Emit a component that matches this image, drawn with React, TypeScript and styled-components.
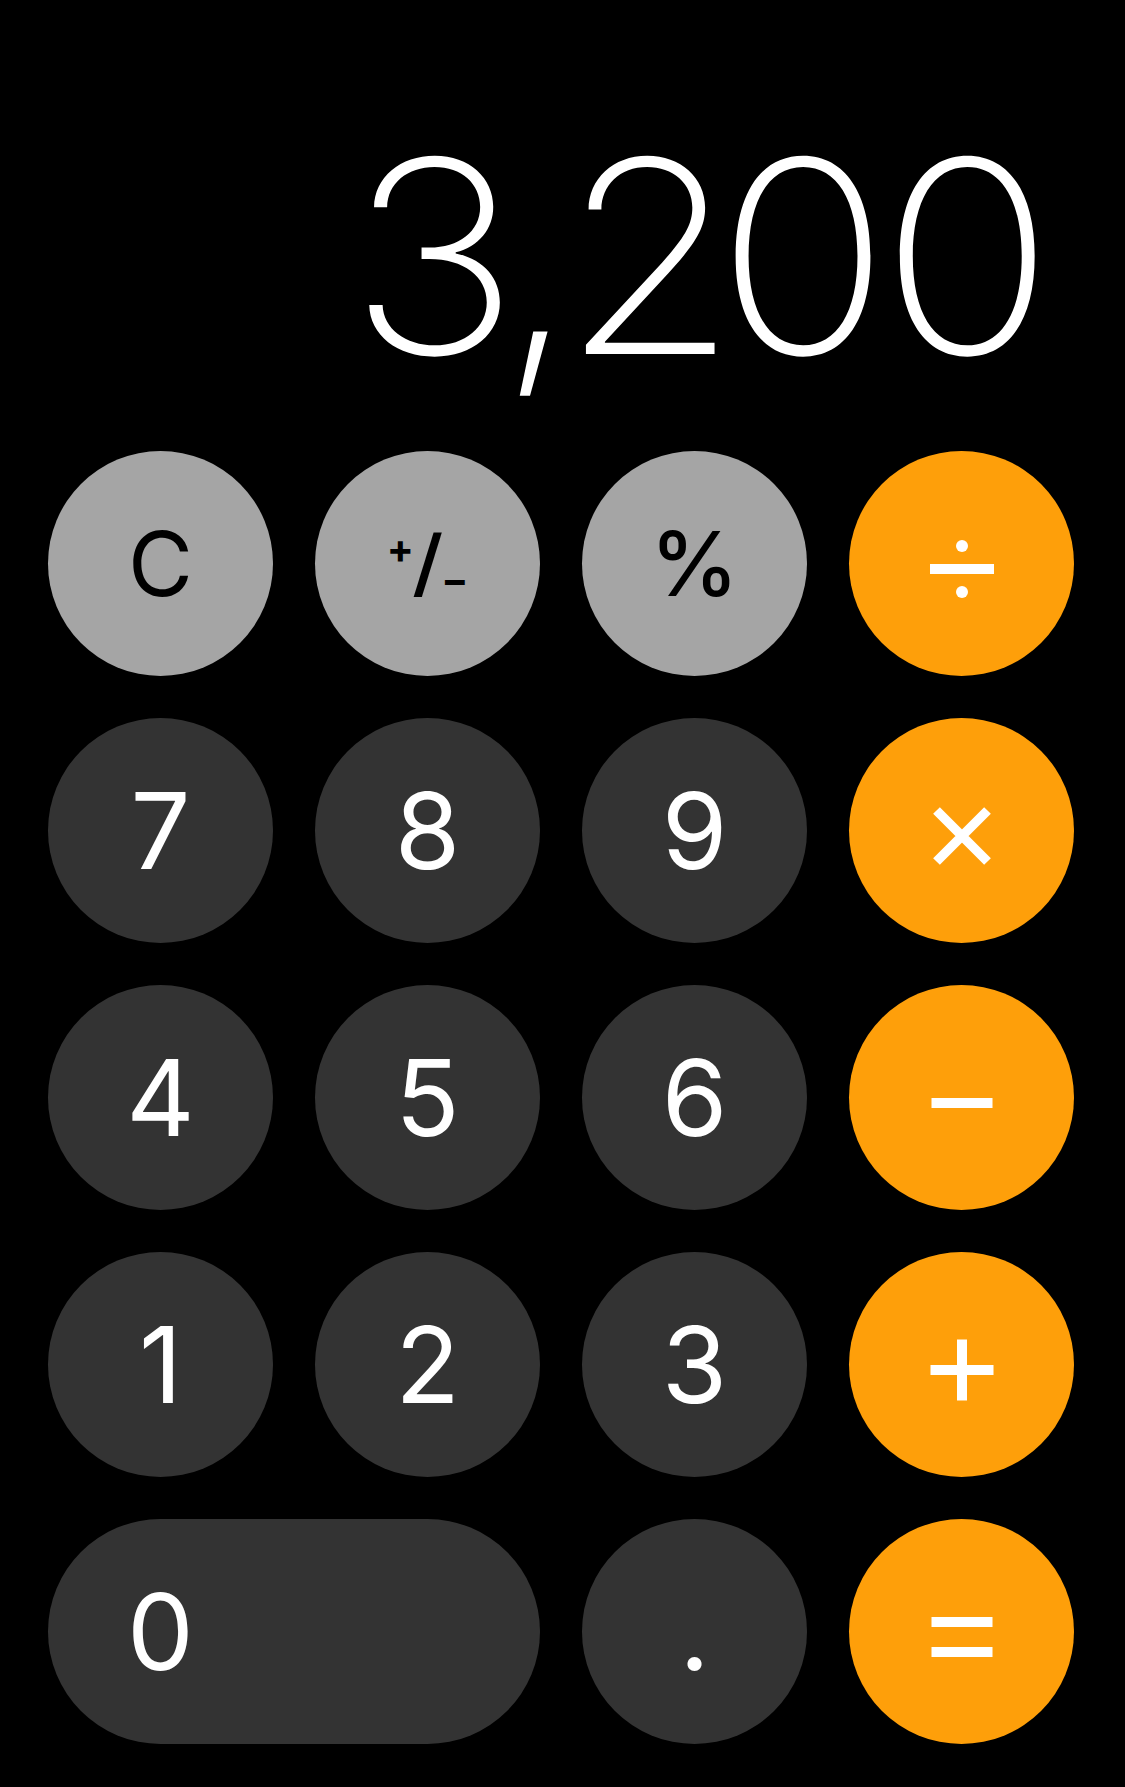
import React from 'react';
import styled, { createGlobalStyle } from 'styled-components';

type Kind = 'func' | 'digit' | 'op';

const colors: Record<Kind, { bg: string; fg: string }> = {
  func: { bg: '#a5a5a5', fg: '#000' },
  digit: { bg: '#333333', fg: '#fff' },
  op: { bg: '#fe9f0a', fg: '#fff' },
};

const GlobalStyle = createGlobalStyle`
  html, body {
    margin: 0;
    padding: 0;
    background: #000;
  }
  body {
    font-family: Inter, "Liberation Sans", sans-serif;
  }
`;

const Screen = styled.div`
  width: 1125px;
  height: 1787px;
  background: #000;
  display: flex;
  flex-direction: column;
`;

const Display = styled.div`
  height: 451px;
  box-sizing: border-box;
  display: flex;
  align-items: flex-end;
  justify-content: flex-end;
  padding: 0 80px 60px 0;
  color: #fff;
`;

// SF-style thin figures are a bit wider than Inter's, so stretch slightly
const Value = styled.div`
  font-size: 269px;
  font-weight: 200;
  line-height: 269px;
  letter-spacing: -9px;
  white-space: nowrap;
  transform: scaleX(1.07);
  transform-origin: right bottom;
`;

const Tight = styled.span<{ $ls: number }>`
  letter-spacing: ${p => p.$ls}px;
`;

const Keypad = styled.div`
  display: grid;
  grid-template-columns: repeat(4, 225px);
  grid-auto-rows: 225px;
  gap: 42px;
  padding: 0 51px 43px 48px;
`;

const Key = styled.button<{ $kind: Kind; $wide?: boolean; $size?: number; $weight?: number }>`
  grid-column: ${p => (p.$wide ? 'span 2' : 'auto')};
  display: flex;
  align-items: center;
  justify-content: ${p => (p.$wide ? 'flex-start' : 'center')};
  border: none;
  border-radius: 112.5px;
  padding: 0;
  margin: 0;
  background: ${p => colors[p.$kind].bg};
  color: ${p => colors[p.$kind].fg};
  font-family: Inter, "Liberation Sans", sans-serif;
  font-size: ${p => p.$size ?? 106}px;
  font-weight: ${p => p.$weight ?? 400};
  line-height: normal;
  cursor: pointer;
`;

const WideLabel = styled.span`
  width: 225px;
  text-align: center;
`;

const PlusMinus = styled.span`
  display: inline-flex;
  align-items: center;
  line-height: 1;
`;

const Small = styled.span<{ $shift: number }>`
  font-size: 40px;
  font-weight: 700;
  transform: translateY(${p => p.$shift}px);
`;

const Slash = styled.span`
  font-size: 74px;
  font-weight: 500;
  transform: translateY(-2px) scaleX(1.15);
`;

const Icon = styled.svg`
  width: 80px;
  height: 80px;
  margin-top: 11px;
  fill: #fff;
`;

const Divide = () => (
  <Icon viewBox="0 0 80 80">
    <circle cx="40" cy="17" r="6" />
    <rect x="8" y="35" width="64" height="10" />
    <circle cx="40" cy="63" r="6" />
  </Icon>
);

const Times = () => (
  <Icon viewBox="0 0 80 80">
    <path d="M14.5 14.5 L65.5 65.5 M65.5 14.5 L14.5 65.5" stroke="#fff" strokeWidth="9.5" fill="none" />
  </Icon>
);

const Minus = () => (
  <Icon viewBox="0 0 80 80">
    <rect x="9.5" y="35" width="61" height="10" />
  </Icon>
);

const Plus = () => (
  <Icon viewBox="0 0 80 80">
    <rect x="8.5" y="35" width="63" height="10" />
    <rect x="35" y="9.5" width="10" height="61" />
  </Icon>
);

const Equals = () => (
  <Icon viewBox="0 0 80 80">
    <rect x="9.5" y="20" width="61" height="10" />
    <rect x="9.5" y="50" width="61" height="10" />
  </Icon>
);

export default function App() {
  return (
    <>
      <GlobalStyle />
      <Screen>
        <Display>
          <Value>
            <Tight $ls={-20}>3</Tight>
            <Tight $ls={-15.5}>,</Tight>
            <Tight $ls={-21}>2</Tight>
            00
          </Value>
        </Display>
        <Keypad>
          <Key $kind="func" $size={89}>C</Key>
          <Key $kind="func" $size={89}>
            <PlusMinus>
              <Small $shift={-15}>+</Small>
              <Slash>/</Slash>
              <Small $shift={16}>−</Small>
            </PlusMinus>
          </Key>
          <Key $kind="func" $size={89} $weight={500}>%</Key>
          <Key $kind="op" aria-label="÷"><Divide /></Key>

          <Key $kind="digit">7</Key>
          <Key $kind="digit">8</Key>
          <Key $kind="digit">9</Key>
          <Key $kind="op" aria-label="×"><Times /></Key>

          <Key $kind="digit">4</Key>
          <Key $kind="digit">5</Key>
          <Key $kind="digit">6</Key>
          <Key $kind="op" aria-label="−"><Minus /></Key>

          <Key $kind="digit">1</Key>
          <Key $kind="digit">2</Key>
          <Key $kind="digit">3</Key>
          <Key $kind="op" aria-label="+"><Plus /></Key>

          <Key $kind="digit" $wide><WideLabel>0</WideLabel></Key>
          <Key $kind="digit">.</Key>
          <Key $kind="op" aria-label="="><Equals /></Key>
        </Keypad>
      </Screen>
    </>
  );
}
